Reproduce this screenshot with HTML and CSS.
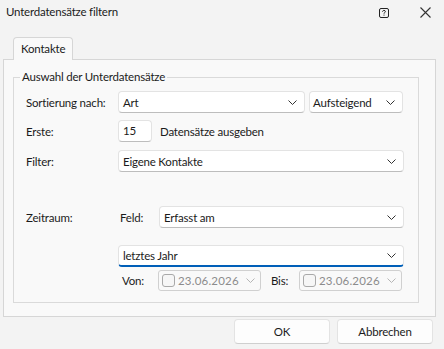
FILE: index.html
```html
<!DOCTYPE html>
<html lang="de">
<head>
    <meta charset="UTF-8">
    <meta name="viewport" content="width=device-width, initial-scale=1.0">
    <title>Unterdatensätze filtern</title>
    <link rel="stylesheet" href="styles.css">
</head>
<body>
    <div class="dialog">
        <header class="titlebar">
            <span class="title">Unterdatensätze filtern</span>
            <div class="title-actions">
                <span class="help-btn">
                    <svg width="10" height="10" viewBox="0 0 10 10">
                        <rect x="0.5" y="0.5" width="9" height="9" rx="1.5" fill="none" stroke="#222" stroke-width="1"/>
                        <path d="M3.6 3.8 C3.6 2.8 4.2 2.4 5 2.4 C5.8 2.4 6.4 2.9 6.4 3.6 C6.4 4.4 5 4.6 5 5.7" fill="none" stroke="#222" stroke-width="1"/>
                        <rect x="4.5" y="6.6" width="1" height="1" fill="#222"/>
                    </svg>
                </span>
                <span class="close-btn">
                    <svg width="11" height="11" viewBox="0 0 11 11">
                        <path d="M0.5 0.5 L10.5 10.5 M10.5 0.5 L0.5 10.5" stroke="#333" stroke-width="1.1"/>
                    </svg>
                </span>
            </div>
        </header>

        <div class="tabs">
            <div class="tab">Kontakte</div>
        </div>

        <div class="tab-pane">
            <fieldset class="group">
                <legend>Auswahl der Unterdatensätze</legend>

                <div class="row row-sort">
                    <span class="lbl">Sortierung nach:</span>
                    <div class="combo combo-art">
                        <span>Art</span>
                        <svg class="chev" width="9" height="5" viewBox="0 0 9 5"><path d="M0.5 0.5 L4.5 4.5 L8.5 0.5" fill="none" stroke="#333" stroke-width="1"/></svg>
                    </div>
                    <div class="combo combo-order">
                        <span>Aufsteigend</span>
                        <svg class="chev" width="9" height="5" viewBox="0 0 9 5"><path d="M0.5 0.5 L4.5 4.5 L8.5 0.5" fill="none" stroke="#333" stroke-width="1"/></svg>
                    </div>
                </div>

                <div class="row row-first">
                    <span class="lbl">Erste:</span>
                    <div class="num-input">15</div>
                    <span class="after">Datensätze ausgeben</span>
                </div>

                <div class="row row-filter">
                    <span class="lbl">Filter:</span>
                    <div class="combo combo-wide">
                        <span>Eigene Kontakte</span>
                        <svg class="chev" width="9" height="5" viewBox="0 0 9 5"><path d="M0.5 0.5 L4.5 4.5 L8.5 0.5" fill="none" stroke="#333" stroke-width="1"/></svg>
                    </div>
                </div>

                <div class="row row-period">
                    <span class="lbl">Zeitraum:</span>
                    <span class="sub-lbl">Feld:</span>
                    <div class="combo combo-field">
                        <span>Erfasst am</span>
                        <svg class="chev" width="9" height="5" viewBox="0 0 9 5"><path d="M0.5 0.5 L4.5 4.5 L8.5 0.5" fill="none" stroke="#333" stroke-width="1"/></svg>
                    </div>
                </div>

                <div class="row row-range">
                    <span class="lbl"></span>
                    <div class="combo combo-wide combo-focus">
                        <span>letztes Jahr</span>
                        <svg class="chev" width="9" height="5" viewBox="0 0 9 5"><path d="M0.5 0.5 L4.5 4.5 L8.5 0.5" fill="none" stroke="#333" stroke-width="1"/></svg>
                    </div>
                </div>

                <div class="row row-dates">
                    <span class="lbl"></span>
                    <span class="date-lbl">Von:</span>
                    <div class="date-box">
                        <span class="check"></span>
                        <span class="date-text">23.06.2026</span>
                        <svg class="chev" width="9" height="5" viewBox="0 0 9 5"><path d="M0.5 0.5 L4.5 4.5 L8.5 0.5" fill="none" stroke="#b5b5b5" stroke-width="1"/></svg>
                    </div>
                    <span class="date-lbl date-lbl-to">Bis:</span>
                    <div class="date-box">
                        <span class="check"></span>
                        <span class="date-text">23.06.2026</span>
                        <svg class="chev" width="9" height="5" viewBox="0 0 9 5"><path d="M0.5 0.5 L4.5 4.5 L8.5 0.5" fill="none" stroke="#b5b5b5" stroke-width="1"/></svg>
                    </div>
                </div>
            </fieldset>
        </div>

        <div class="buttons">
            <button class="btn">OK</button>
            <button class="btn">Abbrechen</button>
        </div>
    </div>
</body>
</html>
```

FILE: styles.css
```css
* {
    margin: 0;
    padding: 0;
    box-sizing: border-box;
}

body {
    font-family: Lato, "Noto Sans", sans-serif;
    font-size: 11.5px;
    letter-spacing: -0.2px;
    color: #1b1b1b;
    background: #f3f3f3;
    width: 444px;
    height: 349px;
    overflow: hidden;
    white-space: nowrap;
}

.dialog {
    display: flex;
    flex-direction: column;
    height: 100%;
}

/* title bar */
.titlebar {
    height: 30px;
    display: flex;
    align-items: flex-start;
    justify-content: space-between;
    padding: 4px 13px 0 6px;
}

.title {
    line-height: 16px;
}

.title-actions {
    display: flex;
    align-items: center;
    gap: 31px;
    padding-top: 3px;
}

.help-btn svg,
.close-btn svg {
    display: block;
}

/* tabs */
.tabs {
    display: flex;
    margin-top: 7px;
    padding-left: 13px;
}

.tab {
    position: relative;
    z-index: 1;
    width: 60px;
    height: 23px;
    margin-bottom: -1px;
    padding: 3px 0 0 7px;
    background: #f9f9f9;
    border: 1px solid #d6d6d6;
    border-bottom: none;
    border-radius: 4px 4px 0 0;
    line-height: 16px;
}

.tab-pane {
    height: 258px;
    margin: 0 8px 0 3px;
    background: #f9f9f9;
    border: 1px solid #d6d6d6;
}

/* group box */
.group {
    margin: 9px 16px 0 9px;
    padding: 0 0 11px 12px;
    border: 1px solid #dadada;
}

.group legend {
    margin-left: -6px;
    padding: 0 2px;
    line-height: 16px;
}

.row {
    display: flex;
    align-items: center;
    height: 22px;
}

.row-sort { margin-top: 6px; }
.row-first { margin-top: 7px; }
.row-filter { margin-top: 8px; }
.row-period { margin-top: 34px; }
.row-range { margin-top: 17px; }
.row-dates { margin-top: 3px; height: 21px; }

.lbl {
    width: 92px;
    flex-shrink: 0;
}

/* combo boxes */
.combo {
    display: flex;
    align-items: center;
    justify-content: space-between;
    flex-shrink: 0;
    height: 22px;
    padding: 0 7px 0 4px;
    background: #fff;
    border: 1px solid #e3e3e3;
    border-bottom-color: #bdbdbd;
    border-radius: 4px;
}

.combo .chev {
    display: block;
}

.combo-art { width: 187px; }

.combo-order {
    width: 94px;
    margin-left: 4px;
    padding-left: 3px;
}

.combo-wide { width: 286px; }

.combo-field { width: 245px; }

.combo-focus {
    border-bottom: 2px solid #005fb8;
}

.num-input {
    width: 34px;
    height: 22px;
    padding: 2px 0 0 4px;
    line-height: 16px;
    background: #fff;
    border: 1px solid #e3e3e3;
    border-bottom-color: #bdbdbd;
    border-radius: 4px;
}

.after {
    margin-left: 8px;
}

.sub-lbl {
    width: 41px;
    padding-left: 2px;
}

/* date pickers */
.date-lbl {
    width: 40px;
    padding-left: 4px;
}

.date-lbl-to {
    width: 28px;
    margin-left: 10px;
    padding-left: 0;
}

.date-box {
    display: flex;
    align-items: center;
    flex-shrink: 0;
    width: 103px;
    height: 21px;
    padding: 0 5px 0 3px;
    border: 1px solid #d0d0d0;
    border-radius: 3px;
    color: #8c8c8c;
}

.check {
    width: 13px;
    height: 13px;
    flex-shrink: 0;
    border: 1px solid #a9a9a9;
    border-radius: 3px;
    background: #f6f6f6;
}

.date-text {
    margin-left: 3px;
    flex: 1;
    letter-spacing: 0.2px;
}

/* footer buttons */
.buttons {
    display: flex;
    justify-content: flex-end;
    gap: 7px;
    padding: 2px 11px 0 0;
}

.btn {
    width: 96px;
    height: 25px;
    font-family: inherit;
    font-size: 11.5px;
    letter-spacing: inherit;
    color: #1b1b1b;
    background: #fdfdfd;
    border: 1px solid #e3e3e3;
    border-bottom-color: #cfcfcf;
    border-radius: 4px;
}
```
